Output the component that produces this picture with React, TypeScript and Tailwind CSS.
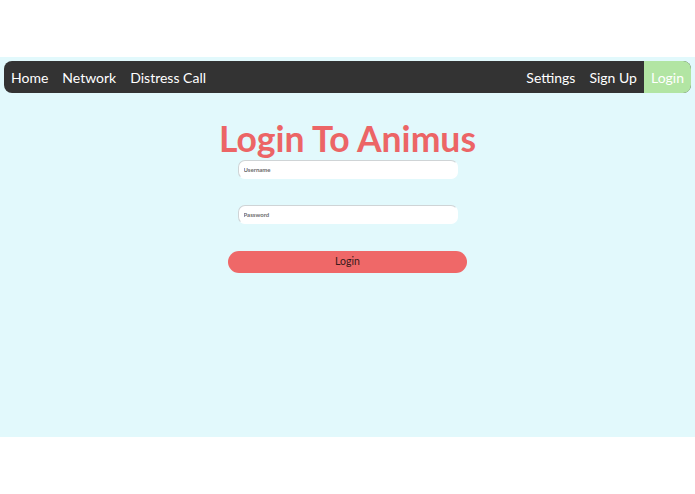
const NavLink = ({ label }: { label: string }) => (
  <a href="#" className="px-[7px] text-white">
    {label}
  </a>
)

const App = () => {
  return (
    <div className="h-[494px] bg-white pt-[57px] font-['Lato','Liberation_Sans',sans-serif]">
      <div className="h-[380px] bg-[#e2f9fc] px-[4px] pt-[4px]">
        <nav className="flex h-[32px] items-center justify-between rounded-[8px] bg-[#333333] text-[14px]">
          <div className="flex items-center">
            <NavLink label="Home" />
            <NavLink label="Network" />
            <NavLink label="Distress Call" />
          </div>
          <div className="flex h-full items-center">
            <NavLink label="Settings" />
            <NavLink label="Sign Up" />
            <a href="#" className="flex h-full items-center rounded-r-[8px] bg-[#b2e5a3] px-[7px] text-white">
              Login
            </a>
          </div>
        </nav>
        <div className="flex flex-col items-center">
          <h1 className="mt-[24px] text-[35.5px] leading-[44px] font-bold text-[#ec6566]">Login To Animus</h1>
          <form className="flex flex-col items-center">
            <input
              type="text"
              placeholder="Username"
              className="mt-[-1px] h-[19px] w-[220px] rounded-[7px] border border-[#cfd4d6] border-r-white border-b-white bg-white px-[5px] text-[6px] font-bold placeholder-[#6b6b6b] focus:outline-none"
            />
            <input
              type="password"
              placeholder="Password"
              className="mt-[26px] h-[19px] w-[220px] rounded-[7px] border border-[#cfd4d6] border-r-white border-b-white bg-white px-[5px] text-[6px] font-bold placeholder-[#6b6b6b] focus:outline-none"
            />
            <button
              type="submit"
              className="mt-[27px] h-[22px] w-[239px] rounded-full bg-[#ef6868] text-[10.5px] text-[#3a1a1a]"
            >
              Login
            </button>
          </form>
        </div>
      </div>
    </div>
  )
}

export default App
